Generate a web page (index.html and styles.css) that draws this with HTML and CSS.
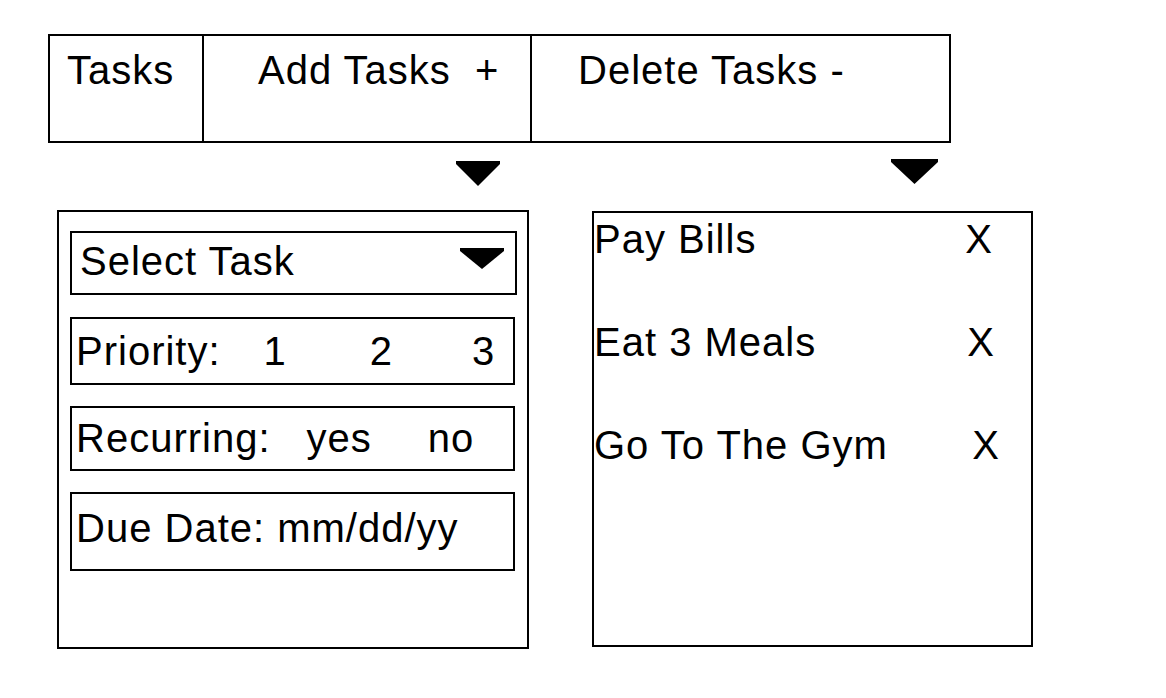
FILE: index.html
```html
<!DOCTYPE html>
<html lang="en">
<head>
  <meta charset="UTF-8">
  <meta name="viewport" content="width=device-width, initial-scale=1.0">
  <title>Tasks</title>
  <link rel="stylesheet" href="styles.css">
</head>
<body>
  <!-- Top menu -->
  <nav class="menu">
    <div class="menu-item menu-tasks">Tasks</div>
    <div class="menu-item menu-add">Add Tasks&nbsp; +</div>
    <div class="menu-item menu-delete">Delete Tasks -</div>
  </nav>

  <!-- Dropdown pointers -->
  <div class="pointers">
    <svg class="pointer pointer-add" viewBox="0 0 44 25"><polygon points="0,0 44,0 44,3 22,25 0,3"/></svg>
    <svg class="pointer pointer-delete" viewBox="0 0 47 25"><polygon points="0,0 47,0 47,3 23.5,25 0,3"/></svg>
  </div>

  <div class="panels">
    <!-- Add Task form -->
    <div class="task-form">
      <div class="field field-select">
        <span>Select Task</span>
        <svg class="select-arrow" viewBox="0 0 44 21"><polygon points="0,0 44,0 44,3 22,21 0,3"/></svg>
      </div>
      <div class="field field-priority">
        Priority:<span class="opt opt-1">1</span><span class="opt opt-2">2</span><span class="opt opt-3">3</span>
      </div>
      <div class="field field-recurring">
        Recurring:<span class="opt opt-yes">yes</span><span class="opt opt-no">no</span>
      </div>
      <div class="field field-due">Due Date: mm/dd/yy</div>
    </div>

    <!-- Delete Task list -->
    <div class="task-list">
      <div class="task-row">
        <span>Pay Bills</span>
        <span class="remove">X</span>
      </div>
      <div class="task-row">
        <span>Eat 3 Meals</span>
        <span class="remove remove-mid">X</span>
      </div>
      <div class="task-row">
        <span>Go To The Gym</span>
        <span class="remove remove-far">X</span>
      </div>
    </div>
  </div>
</body>
</html>
```

FILE: styles.css
```css
* {
  box-sizing: border-box;
}

body {
  margin: 0;
  padding-top: 34px;
  font-family: "Liberation Sans", Arial, sans-serif;
  font-size: 40px;
  line-height: 40px;
  letter-spacing: 1px;
  color: #000;
  background-color: #fff;
}

/* Top menu */
.menu {
  display: flex;
  width: 903px;
  height: 109px;
  margin-left: 48px;
  border: 2px solid #000;
}

.menu-item {
  padding-top: 14px;
  white-space: nowrap;
}

.menu-tasks {
  width: 152px;
  padding-left: 17px;
}

.menu-add {
  width: 328px;
  padding-left: 54px;
  border-left: 2px solid #000;
}

.menu-delete {
  flex: 1;
  padding-left: 46px;
  border-left: 2px solid #000;
}

/* Pointers */
.pointers {
  display: flex;
  align-items: flex-start;
  height: 27px;
  margin-top: 16px;
}

.pointer {
  display: block;
  height: 25px;
  fill: #000;
}

.pointer-add {
  width: 44px;
  margin-top: 2px;
  margin-left: 456px;
}

.pointer-delete {
  width: 47px;
  margin-left: 391px;
}

/* Panels */
.panels {
  display: flex;
  align-items: flex-start;
  margin-top: 24px;
  padding-left: 57px;
}

.task-form {
  display: flex;
  flex-direction: column;
  width: 472px;
  height: 439px;
  padding: 19px 0 0 11px;
  border: 2px solid #000;
}

.field {
  display: flex;
  width: 445px;
  padding-left: 4px;
  border: 2px solid #000;
  white-space: nowrap;
}

.field-select {
  justify-content: space-between;
  width: 447px;
  height: 64px;
  padding: 8px 11px 0 8px;
}

.select-arrow {
  display: block;
  width: 44px;
  height: 21px;
  margin-top: 7px;
  fill: #000;
}

.field-priority {
  height: 68px;
  margin-top: 22px;
  padding-top: 12px;
}

.field-recurring {
  height: 65px;
  margin-top: 21px;
  padding-top: 10px;
}

.field-due {
  height: 79px;
  margin-top: 21px;
  padding-top: 14px;
}

.opt-1 { margin-left: 43px; }
.opt-2 { margin-left: 83px; }
.opt-3 { margin-left: 79px; }
.opt-yes { margin-left: 36px; }
.opt-no { margin-left: 56px; }

/* Task list */
.task-list {
  width: 441px;
  height: 436px;
  margin-top: 1px;
  margin-left: 63px;
  padding-top: 6px;
  border: 2px solid #000;
}

.task-row {
  display: flex;
  justify-content: space-between;
  margin-bottom: 63px;
}

.remove {
  margin-right: 38px;
}

.remove-mid {
  margin-right: 36px;
}

.remove-far {
  margin-right: 31px;
}
```
